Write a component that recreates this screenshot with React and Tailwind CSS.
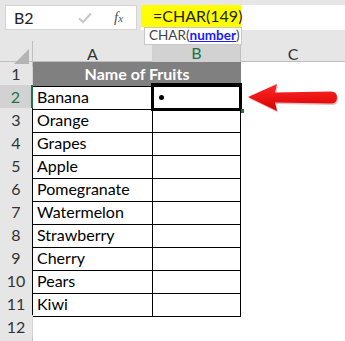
import React from "react";

const fruits = ["Banana","Orange","Grapes","Apple","Pomegranate","Watermelon","Strawberry","Cherry","Pears","Kiwi"];

export default function App() {
  return (
    <div className="relative w-[345px] h-[341px] overflow-hidden bg-white text-black" style={{fontFamily: "Lato, 'Open Sans', sans-serif"}}>
      {/* formula bar */}
      <div className="h-[41px] bg-[#e6e6e6] flex items-start pt-[5px] pl-[5px] gap-[4px]">
        <div className="w-[132px] h-[25px] bg-white border border-[#d4d4d4] flex items-center">
          <span className="pl-[8px] w-[62px] text-[16px] text-[#222]">B2</span>
          <svg width="14" height="12" viewBox="0 0 14 12" className="ml-[10px]">
            <path d="M1 6.5 L5 10 L13 1.5" stroke="#c8c8c8" strokeWidth="2.2" fill="none" />
          </svg>
          <span className="ml-[22px] text-[15px] italic text-[#555]" style={{fontFamily: "'Liberation Serif', serif"}}>f<span className="text-[11px]">x</span></span>
        </div>
        <div className="flex-1 h-[25px] bg-white relative">
          <div className="w-[100px] h-[22px] bg-[#ffff00] flex items-center pl-[12px] text-[16px] text-[#222]">=CHAR(149)</div>
          <div className="absolute left-[3px] top-[22px] w-[98px] h-[18px] bg-white border border-[#c8c8c8] flex items-center pl-[4px] text-[13.5px] text-[#444] leading-none">
            CHAR(<span className="font-bold text-[#1a1aff] underline">number</span>)
          </div>
        </div>
      </div>
      {/* column headers */}
      <div className="grid grid-cols-[33px_120px_88px_1fr] h-[21px] bg-[#e6e6e6] border-b border-[#bfbfbf] text-[16px] text-[#333]">
        <div className="relative border-r border-[#bfbfbf]">
          <div className="absolute right-[3px] bottom-[3px] w-0 h-0 border-l-[15px] border-l-transparent border-b-[15px] border-b-[#b4b4b4]" />
        </div>
        <div className="flex items-center justify-center border-r border-[#d0d0d0]">A</div>
        <div className="flex items-center justify-center bg-[#d2d2d2] border-r border-[#bfbfbf] border-b-2 border-b-[#217346] text-[#217346]">B</div>
        <div className="flex items-center justify-center">C</div>
      </div>
      {/* row 1 */}
      <div className="grid grid-cols-[33px_208px_1fr] h-[23px]">
        <div className="bg-[#e6e6e6] border-r border-[#bfbfbf] border-b border-[#d4d4d4] flex items-center justify-center text-[16px] text-[#333]">1</div>
        <div className="bg-[#808080] border-b border-black flex items-center justify-center text-white font-bold text-[16px]">Name of Fruits</div>
        <div />
      </div>
      {fruits.map((f, i) => {
        const sel = i === 0;
        return (
          <div key={f} className="grid grid-cols-[33px_120px_88px_1fr] h-[23px]">
            <div className={`border-b border-[#d4d4d4] flex items-center justify-center text-[16px] ${sel ? "bg-[#d2d2d2] text-[#217346] border-r-2 border-r-[#217346]" : "bg-[#e6e6e6] text-[#333] border-r border-r-[#bfbfbf]"}`}>{i + 2}</div>
            <div className={`border-b border-r border-black flex items-center pl-[4px] text-[16px] ${sel ? "" : "border-l border-l-black -ml-[1px]"}`}>{f}</div>
            <div className="relative border-b border-r border-black">
              {sel && (
                <>
                  <div className="absolute -left-[2px] -top-[2px] -right-[2px] -bottom-[2px] border-[3px] border-black" />
                  <div className="absolute -right-[4px] -bottom-[4px] w-[4px] h-[4px] bg-[#217346]" />
                  <div className="absolute left-[6px] top-[10px] w-[5px] h-[5px] rounded-full bg-black" />
                </>
              )}
            </div>
            <div />
          </div>
        );
      })}
      {/* row 12 */}
      <div className="grid grid-cols-[33px_1fr] h-[23px]">
        <div className="bg-[#e6e6e6] border-r border-[#bfbfbf] border-b border-[#d4d4d4] flex items-center justify-center text-[16px] text-[#333]">12</div>
        <div />
      </div>
      <div className="grid grid-cols-[33px_1fr] h-[23px]">
        <div className="bg-[#e6e6e6] border-r border-[#bfbfbf]" />
        <div />
      </div>
      {/* red arrow */}
      <svg className="absolute left-[246px] top-[82px]" width="94" height="32" viewBox="0 0 94 32">
        <defs>
          <linearGradient id="rg" x1="0" y1="0" x2="0" y2="1">
            <stop offset="0" stopColor="#ff2a2a" />
            <stop offset="1" stopColor="#d80000" />
          </linearGradient>
        </defs>
        <path d="M2 15 L31 2 L29 10.5 L85 9.5 Q91 9.5 91 15.5 Q91 21.5 85 21.5 L29 20.5 L31 29 Z" fill="#8a0000" opacity="0.25" transform="translate(1,1.5)" />
        <path d="M2 15 L31 2 L29 10.5 L85 9.5 Q91 9.5 91 15.5 Q91 21.5 85 21.5 L29 20.5 L31 29 Z" fill="url(#rg)" />
      </svg>
    </div>
  );
}
